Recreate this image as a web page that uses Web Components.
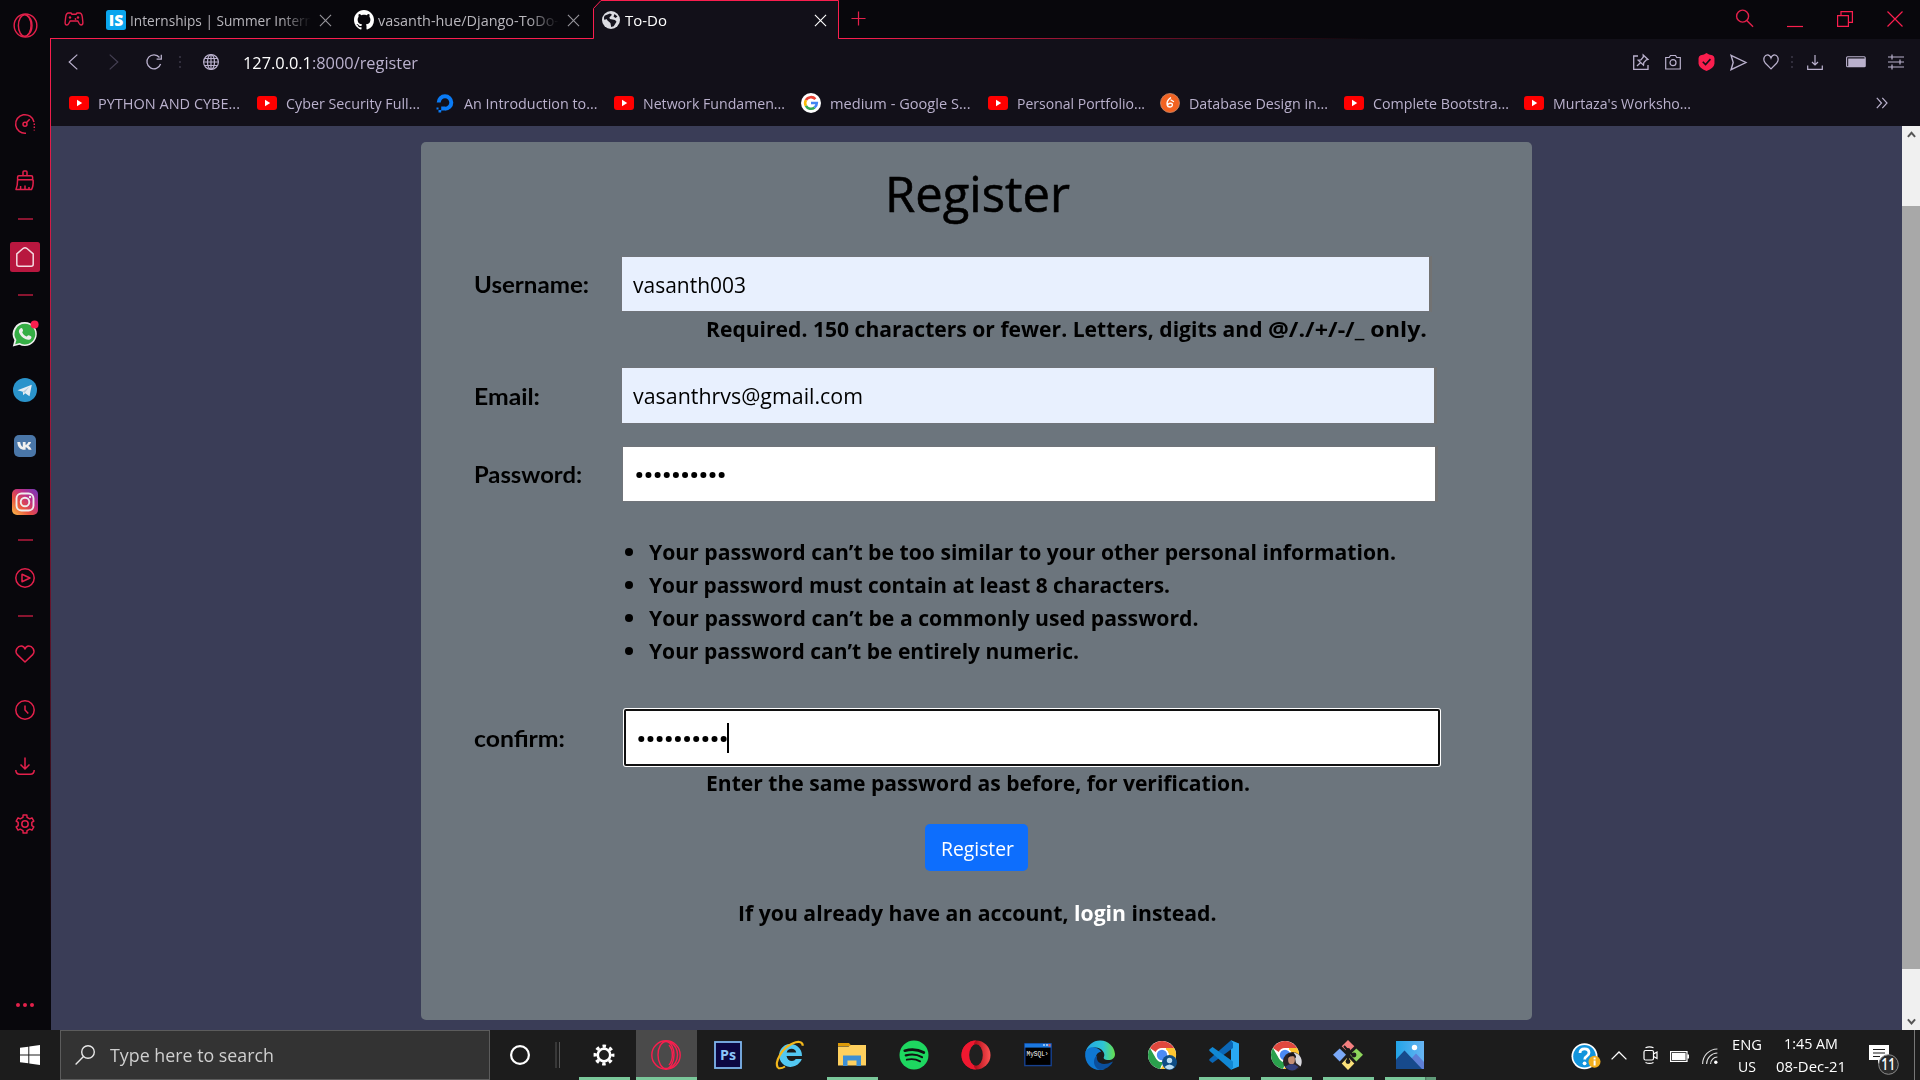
<!DOCTYPE html>
<html lang="en">
<head>
<meta charset="utf-8">
<title>To-Do</title>
<style>
html,body{margin:0;padding:0;width:1920px;height:1080px;overflow:hidden;background:#08070c;font-family:"Open Sans","Noto Sans",sans-serif}
</style>
</head>
<body>
<desktop-screen></desktop-screen>
<script>
const R='#e3204b';
const yt='<rect x="0" y="3" width="20" height="14" rx="3" fill="#f00"/><path d="M8 6.8v6.4l5.2-3.2z" fill="#fff"/>';
const chrome='<circle cx="16" cy="16" r="14" fill="#fff"/><path d="M3.9 9A14 14 0 0 1 28.1 9H16a7 7 0 0 0-6.3 4z" fill="#e0483e"/><path d="M3.9 9l6.1 10.4A7 7 0 0 0 17 23l-3 6.9A14 14 0 0 1 3.9 9z" fill="#2aa04c"/><path d="M28.1 9A14 14 0 0 1 14.5 30L22 19.5A7 7 0 0 0 20 10.5V9z" fill="#fdc631"/><circle cx="16" cy="16" r="6.6" fill="#fff"/><circle cx="16" cy="16" r="5.2" fill="#4b8bf5"/>';
/* six-toothed cog with rounded joins */
const gearPath=(()=>{let d='';const n=6;for(let i=0;i<n;i++){const a=i*2*Math.PI/n-Math.PI/2;[[-.3,7],[-.2,9.3],[.2,9.3],[.3,7]].forEach(([o,r],k)=>{const x=(10+r*Math.cos(a+o)).toFixed(2),y=(10+r*Math.sin(a+o)).toFixed(2);d+=(i||k?'L':'M')+x+' '+y})}return d+'z'})();
/* name: [viewBox width, viewBox height, markup] */
const ICONS={
 gxside:[26,26,`<g fill="none" stroke="${R}" stroke-width="1.5"><ellipse cx="13" cy="13" rx="11.8" ry="12"/><ellipse cx="12.2" cy="13" rx="6.6" ry="11.2"/><path d="M14.5 2.5c7 4 7 17 0 21"/></g>`],
 speed:[20,20,`<g fill="none" stroke="${R}" stroke-width="1.5"><path d="M11 19.2A9.3 9.3 0 1 1 19 8"/><path d="M19.3 9.5v7" stroke-dasharray="1.5 1.6"/><circle cx="10" cy="10.3" r="2"/><path d="M11.3 8.8l3.4-3.5"/></g>`],
 broom:[20,21,`<g fill="none" stroke="${R}" stroke-width="1.5" stroke-linejoin="round"><path d="M8 5.500V2q0-1 1-1h2q1 0 1 1v3.500M2.600 9.800V7q0-1.200 1.200-1.200h12.600q1.200 0 1.200 1.200v2.800zM2.600 9.800q0 6-1.600 9.700h15.500q2-3 1.600-9.700M5.600 19.500v-3.500M10 19.500v-4M14 19.500v-2.600"/></g>`],
 dash:[15,2,`<path d="M0 1h15" stroke="${R}" stroke-width="1.2"/>`],
 home:[30,30,`<rect width="30" height="30" rx="2.5" fill="#b8173f"/><path d="M13.300 6.300q1.700-1.300 3.400 0l6.500 5.600v10.300q0 2-2 2H8.800q-2 0-2-2V11.900z" fill="none" stroke="#f4dbe2" stroke-width="1.5" stroke-linejoin="round"/>`],
 whatsapp:[26,26,`<path d="M13 1a12 12 0 1 1-5.6 22.7L.8 25.4l1.6-6.2A12 12 0 0 1 13 1z" fill="#eee"/><path d="M13 2.7a10.4 10.4 0 1 1-5.3 19.4l-4.5 1.1 1.2-4.2A10.4 10.4 0 0 1 13 2.7z" fill="#35ae45"/><path d="M8.8 7.2c1-.6 1.6.3 2.2 2 .4 1.2-1.2 1.6-.6 2.6 1 1.8 2.200 2.900 4 3.700.9.3 1.200-1.300 2.200-1.200 1 .3 3 1.200 2.900 1.900-.4 2.600-3.300 3.100-5.600 2.100-3.500-1.600-5.600-3.700-6.900-7-.4-1.600.2-3.300 1.800-4.100z" fill="#eee"/><circle cx="22.600" cy="3.500" r="4" fill="#fa1e4e"/>`],
 telegram:[24,24,`<circle cx="12" cy="12" r="12" fill="#2a93cb"/><path d="M4.500 12.200L18.800 6.700 16.500 18.300l-4.300-3-2 2-.4-3.500z" fill="#e6edf3"/><path d="M9.800 13.800l6.700-5.300-4.800 6.300" fill="#b4cbdc"/>`],
 vk:[22,22,`<rect width="22" height="22" rx="5" fill="#4a76a8"/><path d="M3.300 7h2.900c.3 3 1.600 4.700 2.600 4.900V7h2.800v3c1.400-.3 2.300-2 2.800-3h2.700c-.5 1.700-1.700 3-2.700 3.800 1.300.7 2.500 2 3.200 4h-3c-.5-1.400-1.500-2.300-3-2.600v2.600C6.600 15.200 3.600 12.500 3.300 7z" fill="#f0f0f0"/>`],
 insta:[26,26,`<defs><linearGradient id="g" x1="0" y1="1" x2="1" y2="0"><stop offset="0" stop-color="#fcc04a"/><stop offset=".35" stop-color="#e9523f"/><stop offset=".65" stop-color="#bd2f88"/><stop offset="1" stop-color="#6d3bbd"/></linearGradient></defs><rect width="26" height="26" rx="5" fill="url(#g)"/><rect x="4.500" y="4.500" width="17" height="17" rx="5" fill="none" stroke="#eee" stroke-width="1.900"/><circle cx="13" cy="13" r="4.300" fill="none" stroke="#eee" stroke-width="1.900"/><circle cx="18" cy="8" r="1.200" fill="#eee"/>`],
 play:[20,20,`<g fill="none" stroke="${R}" stroke-width="1.500" stroke-linejoin="round"><circle cx="10" cy="10" r="9.200"/><path d="M7 6.300v7.400l8-3.700z"/></g>`],
 heart:[20,18,`<path d="M10 17L2.300 9.600C-1 5.400 3 .8 6.300.9 8.400 1 9.500 2.300 10 4c.5-1.700 1.600-3 3.700-3.100C17 .8 21 5.400 17.700 9.600z" fill="none" stroke="${R}" stroke-width="1.500" stroke-linejoin="round"/>`],
 clock:[20,20,`<g fill="none" stroke="${R}" stroke-width="1.500"><circle cx="10" cy="10" r="9.200"/><path d="M10 5.500V10l3.300 3.400"/></g>`],
 down:[20,18,`<g fill="none" stroke="${R}" stroke-width="1.500"><path d="M10 .5v11M5.500 7.500L10 12l4.500-4.500M.8 13c0 3 1 4.200 4 4.200h10.400c3 0 4-1.200 4-4.200"/></g>`],
 gear:[20,20,`<path d="${gearPath}" fill="none" stroke="${R}" stroke-width="1.500" stroke-linejoin="round"/><circle cx="10" cy="10" r="3.200" fill="none" stroke="${R}" stroke-width="1.500"/>`],
 dots:[20,4,`<g fill="${R}"><circle cx="3" cy="2" r="2"/><circle cx="10" cy="2" r="2"/><circle cx="17" cy="2" r="2"/></g>`],
 pad:[20,14,`<g fill="none" stroke="#e3204b" stroke-width="1.400"><path d="M4.500 1h2.500l1 1.300h4L13 1h2.500q2.300 0 2.800 4l.6 5.500q0 2.500-1.800 2.500-1 0-1.900-1.500L13.800 9H6.200l-1.400 2.500Q4 13 2.900 13 1.100 13 1.100 10.500L1.700 5Q2.200 1 4.500 1z"/></g><g fill="#e3204b"><circle cx="6" cy="5.500" r="1.200"/><circle cx="14" cy="5.500" r="1.200"/><circle cx="11.500" cy="7" r=".9"/></g>`],
 is:[20,20,`<rect width="20" height="20" rx="2.500" fill="#0aa5ee"/><text x="10" y="15.600" text-anchor="middle" font-family="Open Sans" font-weight="800" font-size="15" textLength="14.500" lengthAdjust="spacingAndGlyphs" fill="#fff">IS</text>`],
 github:[16,16,`<path fill="#fff" d="M8 0C3.580 0 0 3.580 0 8c0 3.540 2.290 6.530 5.470 7.590.4.070.55-.17.55-.38 0-.19-.01-.82-.01-1.490-2.010.37-2.530-.49-2.690-.94-.09-.23-.48-.94-.82-1.130-.28-.15-.68-.52-.01-.53.63-.01 1.080.58 1.230.82.72 1.210 1.870.87 2.330.66.070-.52.28-.87.51-1.070-1.780-.2-3.640-.89-3.640-3.950 0-.87.31-1.590.82-2.150-.08-.2-.36-1.020.08-2.120 0 0 .67-.21 2.200.82.64-.18 1.320-.27 2-.27s1.360.09 2 .27c1.530-1.040 2.200-.82 2.200-.82.44 1.100.16 1.920.08 2.120.51.56.82 1.270.82 2.150 0 3.070-1.870 3.750-3.650 3.950.29.25.54.73.54 1.480 0 1.070-.01 1.930-.01 2.200 0 .21.15.46.55.38A8.010 8.010 0 0 0 16 8c0-4.420-3.580-8-8-8z"/>`],
 world:[18,18,`<circle cx="9" cy="9" r="9" fill="#dcdce2"/><path d="M3 4.500L8 2.500l2 1.300-2.600 2.700.5 1.500L13 9l1.500 1.800-2.800 4.400-2.500.8-.8-4L5.500 9.500 4.500 8 2.500 9C1.500 7 2 5.500 3 4.500zM12.500 3l3 2.500L13.500 7l-2-1.500z" fill="#17151f"/>`],
 close:[14,14,`<path d="M1 1l12 12M13 1L1 13" stroke="currentColor" stroke-width="1.200"/>`],
 plus:[16,16,`<path d="M8 .5v15M.5 8h15" stroke="${R}" stroke-width="1.300"/>`],
 find:[20,20,`<g fill="none" stroke="${R}" stroke-width="1.500"><circle cx="8" cy="7.500" r="6.300"/><path d="M12.400 12.200L19 18.800"/></g>`],
 min:[16,16,`<path d="M0 15.500h16" stroke="#fa1e4e" stroke-width="1.200"/>`],
 restore:[16,16,`<path d="M.6 4.600h10.800v10.800H.6zM4 4.600V.6h11.400v10.800h-4" fill="none" stroke="#fa1e4e" stroke-width="1.200"/>`],
 wclose:[16,16,`<path d="M.5.5l15 15M15.500.5l-15 15" stroke="#fa1e4e" stroke-width="1.200"/>`],
 back:[10,16,`<path d="M9.300.6L1.200 8l8.100 7.400" fill="none" stroke="currentColor" stroke-width="1.200"/>`],
 fwd:[10,16,`<path d="M.7.6L8.800 8 .7 15.400" fill="none" stroke="currentColor" stroke-width="1.200"/>`],
 reload:[16,16,`<path d="M14.600 10A7 7 0 1 1 13.500 3.500M15.300 .8V5.200H10.600" fill="none" stroke="currentColor" stroke-width="1.300"/>`],
 vdots:[2,12,`<path d="M1 0v12" stroke="#3d3948" stroke-width="1.500" stroke-dasharray="2 3"/>`],
 globe:[16,16,`<g fill="none" stroke="currentColor" stroke-width="1.200"><circle cx="8" cy="8" r="7.400"/><ellipse cx="8" cy="8" rx="3.500" ry="7.400"/><path d="M8 .6v14.800M.6 8h14.800M1.600 4.500h12.800M1.600 11.500h12.800"/></g>`],
 pin:[16,16,`<g fill="none" stroke="currentColor" stroke-width="1.300"><path d="M5 2H.7v13.300H15V11"/><path d="M10.200 1l4.800 4.500-1.600.4-2.600 2.700-.3 2.600L5.200 6.200l2.700-.4L10.300 3zM7.700 8.500L4 12"/></g>`],
 camera:[16,16,`<g fill="none" stroke="currentColor" stroke-width="1.200"><path d="M.7 3.500h3.500L5.500 1.500h5l1.300 2h3.500V15H.7z"/><circle cx="8" cy="8.700" r="3"/></g>`],
 shield:[16,17,`<path d="M8 0q2 1.500 5.500 2.200Q15.500 3 15.500 5v5q-.5 4-7.500 7-7-3-7.500-7V5q0-2 2-2.800Q6 1.500 8 0z" fill="#fa1e4e"/><path d="M4.500 8.200l2.600 2.600 4.600-5" fill="none" stroke="#121019" stroke-width="1.500"/>`],
 send:[16,16,`<path d="M1 1.200L15 8 1 14.800 3 8z" fill="none" stroke="currentColor" stroke-width="1.300"/>`],
 like:[16,16,`<path d="M8 14.800L2.200 9C-1 4.500 2 .8 4.500.8 6.500.8 7.500 2.500 8 4c.5-1.500 1.500-3.200 3.500-3.200C14 .8 17 4.500 13.800 9z" fill="none" stroke="currentColor" stroke-width="1.200"/>`],
 dl:[16,16,`<path d="M8 1v10M5 8l3 3 3-3M.7 11.500v3.800h14.600v-3.800" fill="none" stroke="currentColor" stroke-width="1.200"/>`],
 batt:[20,12,`<rect x=".6" y=".8" width="18.600" height="10" rx="1" fill="none" stroke="currentColor" stroke-width="1.100"/><rect x="2.200" y="2.500" width="17" height="8.500" fill="currentColor"/>`],
 sliders:[16,16,`<path d="M0 3h16M0 8h16M0 13h16M4 .5v5M12 5.500v5M4 10.500v5" stroke="currentColor" stroke-width="1.200"/>`],
 more:[12,12,`<path d="M.8.8L5.500 6 .8 11.200M6.300.8L11 6l-4.700 5.200" fill="none" stroke="currentColor" stroke-width="1.200"/>`],
 yt:[20,20,yt],
 ocean:[20,20,`<path d="M10 18.300v-4A4.300 4.300 0 1 0 5.700 10H1.700A8.300 8.300 0 1 1 10 18.300z" fill="#0a7bf5" transform="translate(0 -.5)"/><path d="M6.200 13.500H10v4H6.200zM3.500 17h2.700v2.600H3.500zM1.500 14.500h2v2h-2z" fill="#0a7bf5"/>`],
 google:[20,20,`<circle cx="10" cy="10" r="10" fill="#fff"/><g fill="none" stroke-width="2.600"><path d="M14.400 6.200A5.800 5.800 0 0 0 4.900 7.200" stroke="#ea4335"/><path d="M4.900 7.200a5.800 5.800 0 0 0 0 5.600" stroke="#fbbc05"/><path d="M4.900 12.800a5.800 5.800 0 0 0 8.700 1.700" stroke="#34a853"/><path d="M13.600 14.500A5.800 5.800 0 0 0 15.800 10H10" stroke="#4285f4"/></g>`],
 orange:[20,20,`<circle cx="10" cy="10" r="9.500" fill="#f26322" stroke="#c98a6c" stroke-width=".8"/><path d="M10.500 4.800C8 6.500 6.600 9 7.200 12c.6 2.600 4.800 2.800 5.200.2.300-2.300-2.600-2.600-4.600-.8M11 7l2.500 1.500" fill="none" stroke="#fff" stroke-width="1.400" stroke-linecap="round"/>`],
 win:[20,20,`<path d="M0 2.800l8.300-1.100v7.800H0zM9.300 1.500L20 0v9.500H9.300zM0 10.500h8.300v7.800L0 17.200zM9.300 10.500H20V20L9.300 18.500z" fill="#fff"/>`],
 mag:[20,20,`<g fill="none" stroke="#e8e8e8" stroke-width="1.400"><circle cx="13" cy="7" r="6.300"/><path d="M8.500 11.500L.6 19.400"/></g>`],
 cortana:[22,22,`<circle cx="11" cy="11" r="8.900" fill="none" stroke="#fff" stroke-width="2.200"/>`],
 seps:[6,26,`<path d="M1 0v26M4.500 0v26" stroke="#555" stroke-width="1"/>`],
 wgear:[24,24,`<circle cx="12" cy="12" r="6.800" fill="none" stroke="#fff" stroke-width="2.800"/><circle cx="12" cy="12" r="9.600" fill="none" stroke="#fff" stroke-width="3.600" stroke-dasharray="3.770 3.770" stroke-dashoffset="1.900"/>`],
 gx:[30,30,`<g fill="none" stroke="#fa1e4e" stroke-width="1.400"><circle cx="15" cy="15" r="14.200"/><ellipse cx="15" cy="15" rx="8" ry="13.500"/><path d="M18 5c4.500 5 4.500 15 0 20M19 1.800c10 6 10 20 0 26.400"/></g>`],
 ps:[28,28,`<rect x="1" y="1" width="26" height="26" fill="#0c0742" stroke="#7fb6ee" stroke-width="1.800"/><text x="14" y="19" text-anchor="middle" font-family="Open Sans" font-weight="700" font-size="14.500" textLength="16" lengthAdjust="spacingAndGlyphs" fill="#8cc5fa">Ps</text>`],
 ie:[30,30,`<path d="M24.600 22.500A11.500 11.500 0 1 1 27 16H11.500q1 5 5.500 5 2.500 0 3.800-2h6q-.6 2-2.200 3.500zM11.700 12.500h9.500q-.8-3.700-4.600-3.700-4 0-4.900 3.700z" fill="#53c8f2"/><path d="M3 28C-1 22 7 8 17.500 3.500c5-2.300 10-2.500 10.300 2.200" fill="none" stroke="#f4b81c" stroke-width="2.200"/><path d="M3 28c3 1 5.500-.5 7-1.500" fill="none" stroke="#f4b81c" stroke-width="2"/>`],
 folder:[28,24,`<path d="M0 0h11l2.500 3H0z" fill="#dc9a08"/><path d="M0 3.500h10.500L13 2h15v20.500H0z" fill="#fed05e"/><path d="M5 23V12.500h18V23h-4.500v-5.500h-9V23z" fill="#3d8fd4"/>`],
 spotify:[30,30,`<circle cx="15" cy="15" r="14.500" fill="#1ed760"/><g fill="none" stroke="#101010" stroke-linecap="round"><path d="M5.800 10.700q10.200-3 19 1.800" stroke-width="2.700"/><path d="M6.800 15.400q8.800-2.400 16.200 1.700" stroke-width="2.200"/><path d="M7.800 19.700q7.200-1.700 13.300 1.600" stroke-width="1.900"/></g>`],
 opera:[30,30,`<defs><linearGradient id="o"><stop offset="0" stop-color="#e8122a"/><stop offset=".5" stop-color="#b5101d"/><stop offset="1" stop-color="#ff5252"/></linearGradient></defs><circle cx="15" cy="15" r="14.500" fill="url(#o)"/><path d="M15 .5A14.500 14.500 0 0 0 15 29.500L13 27V3z" fill="#ef1830"/><ellipse cx="15" cy="15" rx="6.800" ry="10.700" fill="#202020"/>`],
 mysql:[28,24,`<rect x=".8" y=".8" width="26.400" height="21.800" fill="#000" stroke="#16418f" stroke-width="1.400"/><path d="M.8.600h26.400v4H.8z" fill="#1b78df"/><path d="M19 1h2v2h-2zM22 1h2v2h-2z" fill="#8dbff5"/><path d="M24.500 1h2v2.500h-2z" fill="#e25a4a"/><text x="2.500" y="13" font-family="Liberation Mono" font-size="8" textLength="22" lengthAdjust="spacingAndGlyphs" fill="#fff">MySQL›</text>`],
 edge:[30,30,`<defs><linearGradient id="e1"><stop offset="0" stop-color="#23a4e6"/><stop offset=".6" stop-color="#2ec5d4"/><stop offset="1" stop-color="#66e04c"/></linearGradient></defs><path d="M.3 13A15 15 0 0 1 30 14c0 4-3 6-6.500 6-4 0-5.500-1.500-4.600-3C21 13 16 6.500 9 7.500 4 8.300 1 11 .3 13z" fill="url(#e1)"/><path d="M.2 13C1 8.500 6 6.500 10 7.400c4 .8 6 3.600 6 4.600-5 0-8 8-1.500 13.500 2.500 2.200 4 3 5.500 3.500-10 4-21-4-19.800-16z" fill="#0f78d2"/><path d="M12.500 15.500C10 20 15 28 28 21.500 25 27 20 29.500 15 30 8 28 7 18 12.500 15.500z" fill="#0b4f9c"/>`],
 chrome:[32,32,chrome+'<circle cx="23.500" cy="23.500" r="7.500" fill="#0e4d85"/><circle cx="23.500" cy="21.500" r="2.700" fill="#b7dcf4"/><path d="M18.500 28q5-5 10 0-5 5-10 0z" fill="#b7dcf4"/>'],
 chromep:[34,32,`${chrome}<circle cx="23.500" cy="22.500" r="9.500" fill="#2a2326"/><path d="M25 13.500a9.500 9.500 0 0 1 6.500 14L27 24z" fill="#d9d9de"/><ellipse cx="22.500" cy="21" rx="3.400" ry="4.200" fill="#c58f75"/><path d="M18.500 19q1-5 5-4.500 4 .5 3.500 5l-2-2.500-4 .5z" fill="#15131a"/><path d="M16 28q7-6 13.500 0-6 7-13.500 0z" fill="#35407c"/>`],
 vscode:[30,30,`<path d="M22 .3l8 3.300v22.800l-8 3.300z" fill="#29a8f2"/><path d="M22 .3L24 3v5L3.500 23 .3 20.500v-1.200z" fill="#0b66b5"/><path d="M22 29.700l2-2.500V21.500L3.500 7 .3 9.500v1.200z" fill="#1188d4"/>`],
 git:[30,30,`<path d="M15 0l6.300 6.300L15 12.600 8.700 6.300z" fill="#f58080"/><path d="M6.700 8.400L13 14.700 6.700 21.500 0 14.800z" fill="#7ba9f7"/><path d="M23.300 8.400L30 14.800l-6.700 6.700-6.300-6.700z" fill="#8dd65c"/><path d="M15 17l6.300 6.500L15 30l-6.300-6.500z" fill="#fbe17a"/><path d="M11 6l4 4.500v12M15 10.500l5 5" fill="none" stroke="#1c1c1c" stroke-width="2"/><g fill="#1c1c1c"><circle cx="15" cy="10.500" r="2.400"/><circle cx="15" cy="21.500" r="2.400"/><circle cx="21" cy="15" r="2.400"/></g>`],
 photos:[28,28,`<defs><linearGradient id="p"><stop offset="0" stop-color="#22a4e8"/><stop offset="1" stop-color="#68b4f2"/></linearGradient></defs><rect width="28" height="28" fill="url(#p)"/><path d="M15 18l5-5.500 8 8.500v7H15z" fill="#5e7fd6"/><path d="M0 18.500l8.500-9L26 28H0z" fill="#174a8c"/><circle cx="18.500" cy="6.500" r="2.700" fill="#fff"/>`],
 help:[30,28,`<circle cx="13.500" cy="13.300" r="13" fill="#fff"/><circle cx="13.500" cy="13.300" r="11.300" fill="#1294dc"/><path d="M9 10q0-4.200 4.500-4.200T18 9.800q0 2.200-2.400 3.600-1.900 1.100-1.900 3.100" fill="none" stroke="#fff" stroke-width="2.800"/><circle cx="13.600" cy="20.300" r="1.900" fill="#fff"/><circle cx="23.500" cy="18.700" r="6" fill="#f4ae1c"/><path d="M22.600 17.500h2v5h-2zM22.600 14.500h2v2h-2z" fill="#fff"/>`],
 up:[16,9,`<path d="M.6 8.400L8 1l7.400 7.400" fill="none" stroke="#fff" stroke-width="1.300"/>`],
 meet:[15,18,`<g fill="none" stroke="#fff" stroke-width="1.200"><rect x="1" y="4.500" width="9.500" height="9.500" rx="1.500"/><path d="M10.500 8l3.500-2v6.500l-3.500-2M2.500 1.800q4-1.800 8 0M2.500 16.500q4 1.800 8 0"/></g>`],
 power:[19,11,`<rect x=".6" y=".6" width="16.400" height="9.800" fill="none" stroke="#fff" stroke-width="1.200"/><path d="M2 2h13.600v7H2zM17.300 3.500H19v4h-1.700z" fill="#fff"/>`],
 wifi:[16,16,`<g fill="none" stroke="#ddd" stroke-width="1.100"><path d="M.6 16A15 15 0 0 1 15.400 1M4.600 16A11 11 0 0 1 15.400 5M8.600 16a7 7 0 0 1 6.800-7"/></g><circle cx="13.800" cy="14.300" r="1.700" fill="#fff"/>`],
 note:[30,30,`<path d="M0 0h20v15h-7l-4 4v-4H0z" fill="#fff"/><path d="M4 4.500h12M4 8h12M4 11.500h7" stroke="#1c1c1c" stroke-width="1.200"/><circle cx="19.500" cy="19.500" r="9.800" fill="#2b2b2b" stroke="#8d8d8d" stroke-width="1"/><text x="19.300" y="25" text-anchor="middle" font-family="Open Sans" font-size="15.500" font-weight="600" textLength="14" lengthAdjust="spacingAndGlyphs" fill="#fff">11</text>`],
 sup:[10,8,`<path d="M1 6.500L5 2l4 4.500" fill="none" stroke="#555" stroke-width="2.200"/>`],
 sdown:[10,8,`<path d="M1 1.500L5 6l4-4.500" fill="none" stroke="#555" stroke-width="2.200"/>`]
};
function define(name,render){
  customElements.define(name,class extends HTMLElement{
    connectedCallback(){
      if(this.shadowRoot)return;
      this.attachShadow({mode:'open'}).innerHTML=render(this);
    }
  });
}
define('ui-icon',el=>{
  const [w,h,m]=ICONS[el.getAttribute('name')];
  const W=+(el.getAttribute('w')||w),H=+(el.getAttribute('h')||h*W/w);
  return `<style>:host{display:block;flex:none;width:${W}px;height:${H}px}svg{display:block;overflow:visible}</style><svg width="${W}" height="${H}" viewBox="0 0 ${w} ${h}" preserveAspectRatio="none">${m}</svg>`;
});
/* a single line of text condensed or widened to the width in its w attribute */
customElements.define('fit-text',class extends HTMLElement{
  connectedCallback(){
    if(this.shadowRoot)return;
    const w=+this.getAttribute('w');
    this.attachShadow({mode:'open'}).innerHTML=`<style>:host{display:block;flex:none;width:${w}px}span{display:inline-block;white-space:pre;transform-origin:0 50%}</style><span><slot></slot></span>`;
    const s=this.shadowRoot.querySelector('span');
    const n=s.offsetWidth?s.getBoundingClientRect().width:w;
    s.style.transform=`scaleX(${w/n})`;
  }
});
define('side-item',el=>`<style>:host{display:flex;flex:none;width:50px;height:${el.getAttribute('h')}px;align-items:center;justify-content:center;box-sizing:border-box}</style><ui-icon name="${el.getAttribute('name')}" w="${el.getAttribute('w')}"></ui-icon>`);
define('side-bar',()=>{
  const L=[['gxside',50,25],['',46],['speed',56,20],['broom',57,20],['dash',20,15],['home',56,30],['dash',20,15],['whatsapp',57,26],['telegram',56,24],['vk',56,22],['insta',56,26],['dash',20,15],['play',56,20],['dash',20,15],['heart',56,20],['clock',56,20],['down',55,20],['gear',61,20]];
  return `<style>:host{display:flex;flex-direction:column;flex:none;width:51px;height:1030px;box-sizing:border-box;background:linear-gradient(#fa1e4e,#b31a41 320px,#7a1632 500px,#08070c 920px) 50px 38px/1px 992px no-repeat #08070c}.s{height:46px}.g{flex:1}.e{height:10px}</style>`+
  L.map(([n,h,w])=>n?`<side-item name="${n}" h="${h}" w="${w}"></side-item>`:'<div class="s"></div>').join('')+
  `<div class="g"></div><side-item name="dots" h="30" w="20"></side-item><div class="e"></div>`;
});
define('browser-tab',el=>{
  const a=el.hasAttribute('active');
  return `<style>:host{display:flex;flex:none;align-items:center;height:39px;width:${el.getAttribute('w')}px;box-sizing:border-box;padding:0 ${el.getAttribute('pr')}px 0 ${a?9:12}px;position:relative;font-size:15px;line-height:20px;color:${a?'#fff':'#b9b7bd'}}
  .o{position:absolute;left:0;top:0}ui-icon,.t{position:relative}.t{flex:1;overflow:hidden;margin-left:4px;margin-top:1px;${a?'':'-webkit-mask-image:linear-gradient(90deg,#000 150px,transparent 181px)'}}.x{color:${a?'#fff':'#96949b'};margin-top:1px}</style>`+
  (a?`<svg class="o" width="246" height="39"><path d="M0 39V8L7.500.5H246V39z" fill="#121019"/><path d="M0 38.500H.5V8.500L8 .5H245.500V38.500H246" fill="none" stroke="#fa1e4e"/></svg>`:'')+
  `<ui-icon name="${el.getAttribute('icon')}" w="${a?18:20}"></ui-icon><div class="t"><slot></slot></div><ui-icon class="x" name="close" w="13"></ui-icon>`;
});
define('tab-strip',()=>`<style>:host{display:flex;height:39px;background:linear-gradient(90deg,#fa1e4e 800px,transparent 1320px) 0 38px/100% 1px no-repeat #08070c}.pad{margin:12px 10px 0 13px}.plus{margin:11px 0 0 12px}.g{flex:1}.w{display:flex;align-items:flex-start;padding:11px 17px 0 0}.w ui-icon+ui-icon{margin-left:34px}.w .f{margin-top:-2px;margin-right:-1px}</style>
<ui-icon class="pad" name="pad" w="20"></ui-icon>
<browser-tab w="248" pr="10" icon="is"><fit-text w="183">Internships | Summer Intern</fit-text></browser-tab>
<browser-tab w="251" pr="13" icon="github"><fit-text w="181">vasanth-hue/Django-ToDo-</fit-text></browser-tab>
<browser-tab w="246" pr="12" icon="world" active><fit-text w="42" style="margin-left:1px">To-Do</fit-text></browser-tab>
<ui-icon class="plus" name="plus" w="15"></ui-icon><div class="g"></div>
<div class="w"><ui-icon class="f" name="find" w="19"></ui-icon><ui-icon name="min" w="16"></ui-icon><ui-icon name="restore" w="16"></ui-icon><ui-icon name="wclose" w="16"></ui-icon></div>`);
define('address-bar',()=>`<style>:host{display:flex;align-items:center;height:46px;background:#121019;color:#bab1cd;font-size:16px;line-height:22px}.d{color:#443f52}.g{flex:1}b{font-weight:400;color:#fff}ui-icon{margin-left:var(--m)}</style>
<ui-icon name="back" w="10" style="--m:17px"></ui-icon><ui-icon class="d" name="fwd" w="10" style="--m:31px"></ui-icon><ui-icon name="reload" w="16" style="--m:27px"></ui-icon><ui-icon name="vdots" w="2" style="--m:17px"></ui-icon><ui-icon name="globe" w="16" style="--m:22px"></ui-icon>
<fit-text w="175" style="margin:2px 0 0 24px"><b>127.0.0.1</b>:8000/register</fit-text><div class="g"></div>
<ui-icon name="pin" w="16"></ui-icon><ui-icon name="camera" w="16" style="--m:16px"></ui-icon><ui-icon name="shield" w="17" style="--m:17px"></ui-icon><ui-icon name="send" w="17" style="--m:15px"></ui-icon><ui-icon name="like" w="16" style="--m:16px"></ui-icon><ui-icon name="vdots" w="2" style="--m:12px"></ui-icon><ui-icon name="dl" w="16" style="--m:14px"></ui-icon><ui-icon name="batt" w="20" style="--m:23px"></ui-icon><ui-icon name="sliders" w="16" style="--m:22px;margin-right:16px"></ui-icon>`);
define('book-mark',el=>`<style>:host{display:flex;flex:none;align-items:center;width:${el.getAttribute('w')}px;gap:9px}</style><ui-icon name="${el.getAttribute('icon')}" w="20"></ui-icon><slot></slot>`);
define('bookmark-bar',()=>{
  const B=[['yt',187.5,142,'PYTHON AND CYBE...'],['yt',178.5,134,'Cyber Security Full...'],['ocean',179,133.5,'An Introduction to...'],['yt',187,142,'Network Fundamen...'],['google',186.5,140.5,'medium - Google S...'],['yt',172.5,128,'Personal Portfolio...'],['orange',184,139,'Database Design in...'],['yt',180,136,'Complete Bootstra...'],['yt',180,138,"Murtaza's Worksho..."]];
  return `<style>:host{display:flex;align-items:center;height:41px;padding:0 32px 5px 18px;background:#121019;color:#bab1cd;font-size:15px;line-height:22px;box-sizing:border-box}fit-text{margin-top:-1px}.g{flex:1}</style>`+B.map(([i,w,t,s])=>`<book-mark icon="${i}" w="${w}"><fit-text w="${t}">${s}</fit-text></book-mark>`).join('')+'<div class="g"></div><ui-icon name="more" w="12"></ui-icon>';
});
define('form-field',el=>{
  const f=el.hasAttribute('focus');
  return `<style>:host{display:flex;align-items:center;height:${el.getAttribute('h')}px}
  .l{box-sizing:border-box;width:${el.getAttribute('lw')}px;padding:2px 0 0 52.5px;font:700 22.5px/30px Lato,"Open Sans",sans-serif}
  .i{display:flex;align-items:center;box-sizing:border-box;height:100%;width:${el.getAttribute('w')}px;padding:1px 0 0 11px;background:${el.getAttribute('fill')};border:1px solid #70747a;border-right:3px solid #727272;font-size:21px;line-height:30px}
  ${f?'.i{padding-left:10px;border:2px solid #101010;box-shadow:0 0 0 1px #fff;border-radius:2px;height:57px;margin-left:1px}':''}
  .c{width:2px;height:30px;background:#000;margin-left:-2px}</style>
  <div class="l"><fit-text w="${el.getAttribute('tw')}">${el.getAttribute('label')}</fit-text></div><div class="i"><slot></slot>${f?'<div class="c"></div>':''}</div>`;
});
define('pass-dots',()=>`<style>:host{display:flex;padding:1px 0 0 2px;color:#000}svg{display:block}</style><svg width="91" height="8">${Array.from({length:10},(_,i)=>`<circle cx="${3.3+i*9.15}" cy="4" r="3"/>`).join('')}</svg>`);
define('register-card',()=>`<style>:host{display:flex;flex-direction:column;box-sizing:border-box;width:1111px;height:878px;margin:16px 0 0 370px;background:#6c757d;border-radius:5px;color:#000}
h1{display:flex;margin:0 0 13px;height:101px;align-items:center;padding-left:463.5px;font-weight:500;font-size:50px;line-height:60px;-webkit-text-stroke:.6px #000}
.h{display:flex;font-weight:700;font-size:21px;line-height:33px;padding-left:285px}
ul{list-style:none;margin:33.5px 0 40.5px;padding:0 0 0 204px;font-weight:700;font-size:21px;line-height:33px}
li{display:flex;align-items:center;gap:16px}li::before{content:"";width:8px;height:8px;border-radius:50%;background:#000}
.b{display:flex;align-items:center;justify-content:center;box-sizing:border-box;width:103px;height:47px;padding:2px 0 0 1px;margin:25px 0 25px 504px;border-radius:5px;background:#0d6efd;color:#fff;font-size:19.5px;line-height:28px}
.a{display:flex;padding:1px 0 0 316.5px;font-weight:700;font-size:21px;line-height:33px}.a b{font-weight:700;color:#fff}</style>
<h1><fit-text w="185">Register</fit-text></h1>
<form-field label="Username:" tw="115" lw="200" w="811" h="56" fill="#e8f0fe"><fit-text w="113">vasanth003</fit-text></form-field>
<div class="h" style="padding-top:1px;line-height:32px"><fit-text w="562">Required. 150 characters or fewer. Letters, digits and </fit-text><fit-text w="159">@/./+/-/_ only.</fit-text></div>
<form-field style="margin-top:22px" label="Email:" tw="66" lw="200" w="816" h="57" fill="#e8f0fe"><fit-text w="230">vasanthrvs@gmail.com</fit-text></form-field>
<form-field style="margin-top:22px" label="Password:" tw="108" lw="201" w="816" h="56" fill="#fff"><pass-dots></pass-dots></form-field>
<ul><li><fit-text w="747">Your password can’t be too similar to your other personal information.</fit-text></li><li><fit-text w="521">Your password must contain at least 8 characters.</fit-text></li><li><fit-text w="549.5">Your password can’t be a commonly used password.</fit-text></li><li><fit-text w="430">Your password can’t be entirely numeric.</fit-text></li></ul>
<form-field label="confirm:" tw="91" lw="202" w="816" h="59" fill="#fff" focus><pass-dots></pass-dots></form-field>
<div class="h" style="line-height:32px"><fit-text w="544">Enter the same password as before, for verification.</fit-text></div>
<div class="b"><fit-text w="73">Register</fit-text></div>
<div class="a"><fit-text w="478.5">If you already have an account, <b>login</b> instead.</fit-text></div>`);
define('scroll-bar',()=>`<style>:host{display:flex;flex-direction:column;align-items:center;justify-content:space-between;box-sizing:border-box;width:18px;padding:5px 0;background:linear-gradient(#f0f0f0 80px,#a8a8a8 80px 843px,#f0f0f0 843px)}</style><ui-icon name="sup" w="9"></ui-icon><ui-icon name="sdown" w="9"></ui-icon>`);
define('page-view',()=>`<style>:host{display:flex;justify-content:space-between;height:904px;background:#3a3d57}</style><register-card></register-card><scroll-bar></scroll-bar>`);
define('task-item',el=>`<style>:host{display:flex;flex:none;flex-direction:column;align-items:center;width:62px;height:50px}.i{flex:1;display:flex;align-items:center;justify-content:center;width:61px;padding-top:2px;background:${el.hasAttribute('active')?'#4a4a4a':'none'}}.u{width:${el.hasAttribute('active')?61:51}px;height:3px;background:${el.hasAttribute('run')?(el.getAttribute('run')==='split'?'linear-gradient(90deg,#7ac79a 40px,#457358 40px,#5f9a78 42px)':'#7ac79a'):'none'}}</style><div class="i"><ui-icon name="${el.getAttribute('name')}" w="${el.getAttribute('w')}"></ui-icon></div><div class="u"></div>`);
define('task-bar',()=>`<style>:host{display:flex;align-items:center;height:50px;background:#1c1c1c;color:#fff}
.s{display:flex;align-items:center;box-sizing:border-box;width:430px;height:50px;margin-left:20px;padding:0 0 0 14px;gap:15px;background:#333;border:1px solid #5c5c5c;color:#cfcfcf;font-size:19px;line-height:28px}
.g{flex:1}.t{display:flex;flex-direction:column;align-items:center;font-size:15px;line-height:22px}.end{width:1px;height:50px;background:#777;margin:0 5px 0 15px}</style>
<ui-icon name="win" w="20" style="margin-left:20px"></ui-icon>
<div class="s"><ui-icon name="mag" w="20"></ui-icon><fit-text w="164">Type here to search</fit-text></div>
<ui-icon name="cortana" w="22" style="margin-left:19px"></ui-icon><ui-icon name="seps" w="6" style="margin:0 12px 0 24px"></ui-icon>
<task-item name="wgear" w="22" run></task-item><task-item name="gx" w="30" run active></task-item><task-item name="ps" w="28"></task-item><task-item name="ie" w="30"></task-item><task-item name="folder" w="28" run></task-item><task-item name="spotify" w="30"></task-item><task-item name="opera" w="30"></task-item><task-item name="mysql" w="28"></task-item><task-item name="edge" w="30"></task-item><task-item name="chrome" w="32"></task-item><task-item name="vscode" w="30" run></task-item><task-item name="chromep" w="34" run></task-item><task-item name="git" w="30" run></task-item><task-item name="photos" w="28" run="split"></task-item>
<div class="g"></div>
<ui-icon name="help" w="30" style="margin-top:3px"></ui-icon><ui-icon name="up" w="16" style="margin-left:10px"></ui-icon><ui-icon name="meet" w="15" style="margin-left:16px"></ui-icon><ui-icon name="power" w="19" style="margin-left:12px;margin-top:2px"></ui-icon><ui-icon name="wifi" w="16" style="margin-left:13px;margin-top:2px"></ui-icon>
<div class="t" style="margin-left:14px"><fit-text w="30">ENG</fit-text><fit-text w="18">US</fit-text></div>
<div class="t" style="margin-left:14px;line-height:23px;margin-top:-1px"><fit-text w="54">1:45 AM</fit-text><fit-text w="70">08-Dec-21</fit-text></div>
<ui-icon name="note" w="30" style="margin:10px 0 0 23px"></ui-icon><div class="end"></div>`);
define('desktop-screen',()=>`<style>:host{display:flex;flex-direction:column;width:1920px;height:1080px}.u{display:flex;height:1030px}.m{flex:1;display:flex;flex-direction:column}</style><div class="u"><side-bar></side-bar><div class="m"><tab-strip></tab-strip><address-bar></address-bar><bookmark-bar></bookmark-bar><page-view></page-view></div></div><task-bar></task-bar>`);
</script>
</body>
</html>
